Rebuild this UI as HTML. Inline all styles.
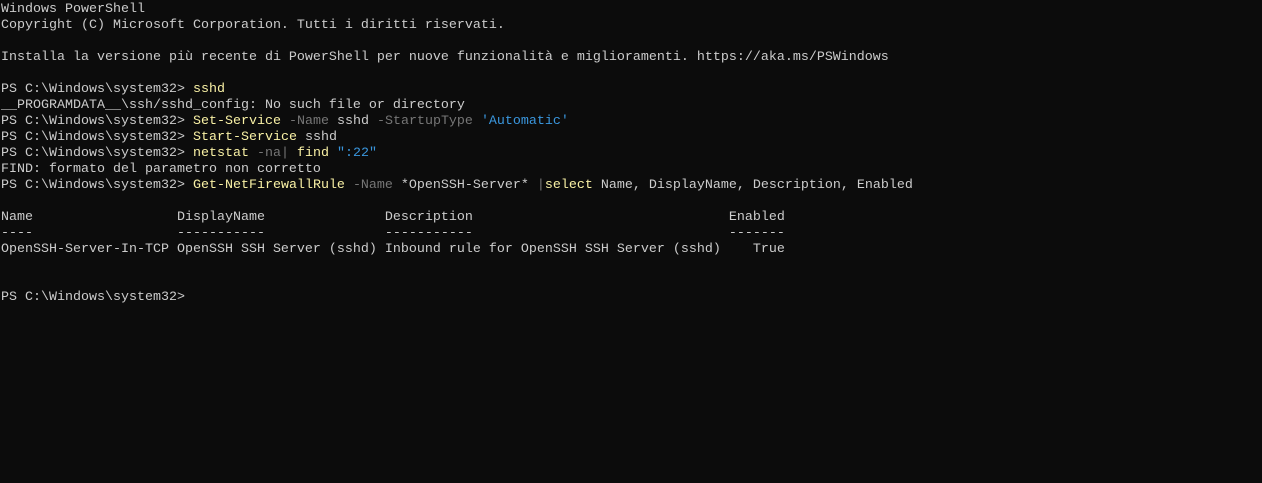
<!DOCTYPE html>
<html><head><meta charset="utf-8"><style>
html,body{margin:0;padding:0;background:#0c0c0c;width:1262px;height:483px;overflow:hidden}
pre{margin:0;padding:2px 0 0 1px;font-family:"Liberation Mono",monospace;font-size:13.33px;line-height:16px;color:#cccccc;white-space:pre}
.y{color:#f9f1a5}.g{color:#767676}.b{color:#3a96dd}
</style></head><body><pre>Windows PowerShell
Copyright (C) Microsoft Corporation. Tutti i diritti riservati.

Installa la versione più recente di PowerShell per nuove funzionalità e miglioramenti. https://aka.ms/PSWindows

PS C:\Windows\system32&gt; <span class="y">sshd</span>
__PROGRAMDATA__\ssh/sshd_config: No such file or directory
PS C:\Windows\system32&gt; <span class="y">Set-Service</span> <span class="g">-Name</span> sshd <span class="g">-StartupType</span> <span class="b">'Automatic'</span>
PS C:\Windows\system32&gt; <span class="y">Start-Service</span> sshd
PS C:\Windows\system32&gt; <span class="y">netstat</span> <span class="g">-na|</span> <span class="y">find</span> <span class="b">":22"</span>
FIND: formato del parametro non corretto
PS C:\Windows\system32&gt; <span class="y">Get-NetFirewallRule</span> <span class="g">-Name</span> *OpenSSH-Server* <span class="g">|</span><span class="y">select</span> Name, DisplayName, Description, Enabled

Name                  DisplayName               Description                                Enabled
----                  -----------               -----------                                -------
OpenSSH-Server-In-TCP OpenSSH SSH Server (sshd) Inbound rule for OpenSSH SSH Server (sshd)    True


PS C:\Windows\system32&gt;</pre></body></html>
